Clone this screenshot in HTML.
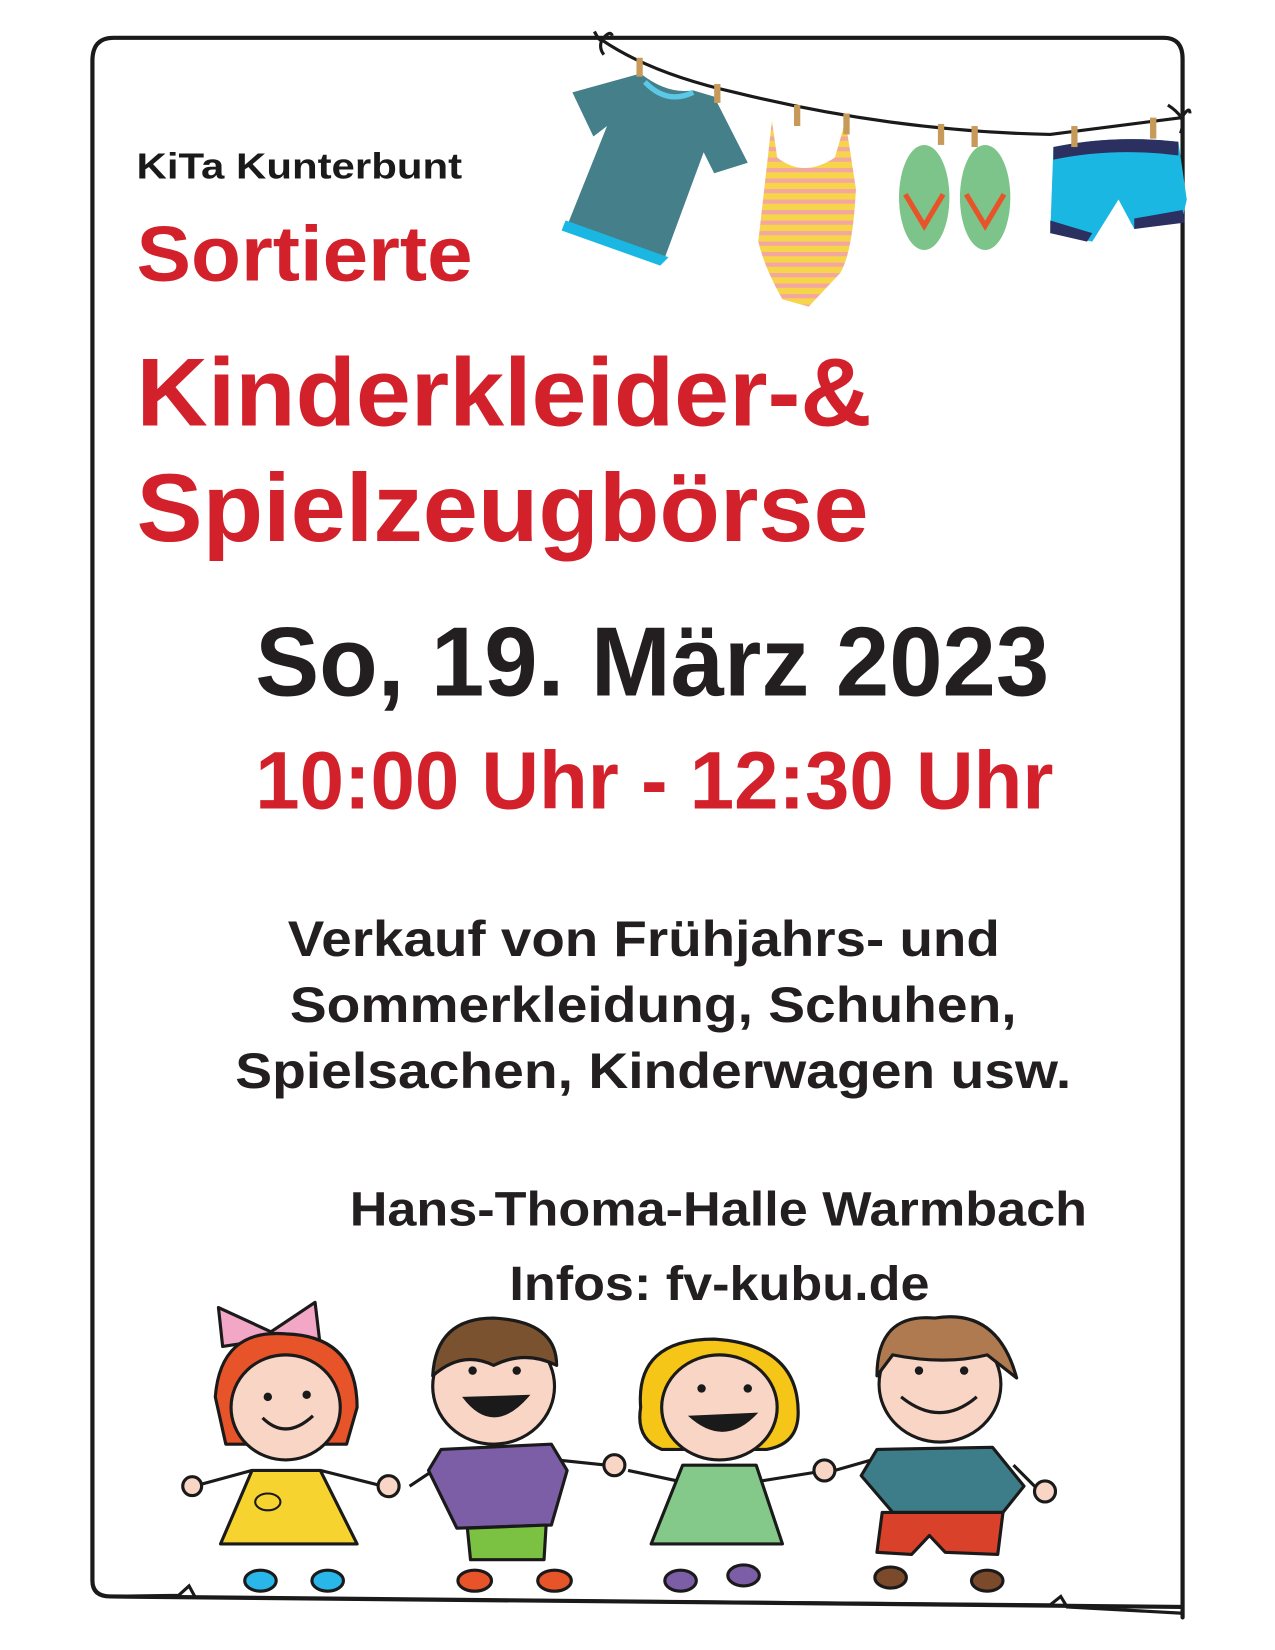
<!DOCTYPE html>
<html><head><meta charset="utf-8"><style>
html,body{margin:0;padding:0;background:#fff;}
svg{display:block;}
text{font-family:"Liberation Sans",sans-serif;font-weight:bold;}
</style></head><body>
<svg width="1275" height="1650" viewBox="0 0 1214 1571" preserveAspectRatio="none" xmlns="http://www.w3.org/2000/svg">
<defs>
<pattern id="st" width="10" height="10" patternUnits="userSpaceOnUse"><rect width="10" height="10" fill="#f7d54a"/><rect width="10" height="4" fill="#f3a7a0"/></pattern>
</defs>
<!-- frame -->
<path d="M108 36 L1108 36 Q1126 36 1126 56 L1126 1540 M88 1505 L88 58 Q88 36 108 36 M88 1505 Q88 1520 105 1520 L1126 1530" fill="none" stroke="#1a1a1a" stroke-width="4" stroke-linecap="round"/>
<path d="M100 1520 L170 1519 L180 1510 L186 1521 L1000 1528 L1010 1520 L1016 1530 L1126 1536" fill="none" stroke="#1a1a1a" stroke-width="3"/>
<!-- clothesline -->
<path d="M573 38 Q620 70 700 88 Q850 125 1000 128 L1125 112" fill="none" stroke="#1a1a1a" stroke-width="3"/>
<path d="M566 30 q5 10 7 8 q8 -10 10 -4 M573 38 q-3 8 2 14" fill="none" stroke="#1a1a1a" stroke-width="3"/>
<path d="M1112 100 q8 5 13 12 q8 -12 8 -4 M1125 112 q2 8 -1 15" fill="none" stroke="#1a1a1a" stroke-width="3"/>
<!-- t-shirt -->
<path d="M545 88 L610 70 Q635 90 660 86 L680 92 L712 155 L680 165 L670 145 L632 248 L540 215 L578 120 L565 130 Z" fill="#447f8a"/>
<path d="M540 213 L632 246 L628 250 L538 218 Z" fill="#1bb7e3" stroke="#1bb7e3" stroke-width="5"/>
<path d="M614 78 Q635 100 660 88" fill="none" stroke="#5cc8e8" stroke-width="5"/>
<!-- swimsuit -->
<path d="M735 115 L740 150 Q765 170 795 150 L805 115 L815 180 Q812 240 800 260 L770 292 L745 285 Q728 255 722 230 Z" fill="url(#st)"/>
<!-- flipflops -->
<ellipse cx="880" cy="188" rx="24" ry="50" fill="#7cc48a"/>
<ellipse cx="938" cy="188" rx="24" ry="50" fill="#7cc48a"/>
<path d="M862 185 L880 215 L898 185 M920 185 L938 215 L956 185" fill="none" stroke="#e8542a" stroke-width="5"/>
<!-- shorts -->
<path d="M1003 140 Q1060 128 1122 135 L1130 190 L1125 212 L1080 218 L1065 190 L1040 230 L1000 222 Z" fill="#1bb7e3"/>
<path d="M1003 140 Q1060 128 1122 135 L1122 148 Q1060 140 1003 152 Z M1000 210 L1040 222 L1035 230 L1000 222 Z M1080 208 L1126 200 L1128 212 L1080 218 Z" fill="#2b3060"/>
<!-- pegs -->
<g fill="#c89a5a"><rect x="606" y="55" width="6" height="18"/><rect x="680" y="80" width="6" height="18"/><rect x="756" y="100" width="6" height="20"/><rect x="803" y="108" width="6" height="20"/><rect x="893" y="118" width="6" height="20"/><rect x="925" y="120" width="6" height="20"/><rect x="1020" y="120" width="6" height="20"/><rect x="1095" y="112" width="6" height="20"/></g>
<!-- text -->
<text x="130" y="170" font-size="34" fill="#1a1a1a" textLength="310" lengthAdjust="spacingAndGlyphs">KiTa Kunterbunt</text>
<text x="130" y="267" font-size="74" fill="#d3212c" textLength="320" lengthAdjust="spacingAndGlyphs">Sortierte</text>
<text x="130" y="405" font-size="92" fill="#d3212c" textLength="700" lengthAdjust="spacingAndGlyphs">Kinderkleider-&amp;</text>
<text x="130" y="515" font-size="92" fill="#d3212c" textLength="697" lengthAdjust="spacingAndGlyphs">Spielzeugbörse</text>
<text x="243" y="662" font-size="94" fill="#231f20" textLength="756" lengthAdjust="spacingAndGlyphs">So, 19. März 2023</text>
<text x="243" y="770" font-size="78" fill="#d3212c" textLength="760" lengthAdjust="spacingAndGlyphs">10:00 Uhr - 12:30 Uhr</text>
<text x="274" y="910" font-size="48" fill="#231f20" textLength="678" lengthAdjust="spacingAndGlyphs">Verkauf von Frühjahrs- und</text>
<text x="276" y="973" font-size="48" fill="#231f20" textLength="692" lengthAdjust="spacingAndGlyphs">Sommerkleidung, Schuhen,</text>
<text x="224" y="1036" font-size="48" fill="#231f20" textLength="796" lengthAdjust="spacingAndGlyphs">Spielsachen, Kinderwagen usw.</text>
<text x="333" y="1167" font-size="46" fill="#231f20" textLength="702" lengthAdjust="spacingAndGlyphs">Hans-Thoma-Halle Warmbach</text>
<text x="485" y="1238" font-size="46" fill="#231f20" textLength="400" lengthAdjust="spacingAndGlyphs">Infos: fv-kubu.de</text>
<!-- kids -->
<g stroke="#1a1a1a" stroke-width="3" stroke-linejoin="round">
<!-- arms -->
<path d="M185 1415 L240 1400 M305 1400 L365 1415 M390 1415 L420 1395 M530 1390 L578 1395 M598 1400 L645 1410 M725 1410 L775 1402 M795 1400 L830 1390 M965 1395 L990 1420" fill="none"/>
<!-- kid1 -->
<path d="M208 1245 L258 1268 L300 1240 L305 1282 L258 1275 L212 1282 Z" fill="#f3a7c6"/>
<path d="M205 1330 Q210 1265 272 1270 Q340 1272 340 1340 L330 1375 L215 1375 Z" fill="#e8542a"/>
<ellipse cx="272" cy="1340" rx="52" ry="50" fill="#f9d5c5"/>
<path d="M240 1400 L305 1400 L340 1470 L210 1470 Z" fill="#f6d32e"/>
<ellipse cx="248" cy="1505" rx="15" ry="10" fill="#29b6e8"/><ellipse cx="312" cy="1505" rx="15" ry="10" fill="#29b6e8"/>
<circle cx="183" cy="1415" r="9" fill="#f9d5c5"/><circle cx="370" cy="1415" r="10" fill="#f9d5c5"/>
<!-- kid2 -->
<ellipse cx="470" cy="1320" rx="58" ry="55" fill="#f9d5c5"/>
<path d="M412 1310 Q415 1255 470 1255 Q530 1258 530 1300 Q500 1285 470 1300 Q440 1285 412 1310 Z" fill="#7a5230"/>
<path d="M420 1380 L525 1375 L540 1400 L525 1452 L435 1455 L408 1400 Z" fill="#7b5ea6"/>
<path d="M445 1455 L520 1452 L518 1485 L448 1485 Z" fill="#7cc242"/>
<ellipse cx="452" cy="1505" rx="16" ry="10" fill="#e8542a"/><ellipse cx="528" cy="1505" rx="16" ry="10" fill="#e8542a"/>
<circle cx="585" cy="1395" r="10" fill="#f9d5c5"/>
<!-- kid3 -->
<path d="M610 1340 Q605 1275 680 1275 Q760 1280 760 1345 Q760 1375 730 1380 L630 1380 Q605 1370 610 1340 Z" fill="#f5c518"/>
<ellipse cx="685" cy="1340" rx="55" ry="50" fill="#f9d5c5"/>
<path d="M650 1395 L720 1395 L745 1470 L620 1470 Z" fill="#84c98a"/>
<ellipse cx="648" cy="1505" rx="15" ry="10" fill="#7b5ea6"/><ellipse cx="708" cy="1500" rx="15" ry="10" fill="#7b5ea6"/>
<circle cx="785" cy="1400" r="10" fill="#f9d5c5"/>
<!-- kid4 -->
<ellipse cx="895" cy="1318" rx="58" ry="55" fill="#f9d5c5"/>
<path d="M835 1310 Q835 1250 890 1255 Q950 1245 968 1312 L940 1290 Q900 1300 850 1290 Z" fill="#b07a50"/>
<path d="M835 1380 L945 1378 L975 1415 L955 1440 L850 1440 L820 1405 Z" fill="#3d7d8a"/>
<path d="M840 1440 L955 1440 L950 1480 L900 1478 L885 1462 L868 1480 L835 1478 Z" fill="#d9412b"/>
<ellipse cx="848" cy="1502" rx="15" ry="10" fill="#7a4a2a"/><ellipse cx="940" cy="1505" rx="15" ry="10" fill="#7a4a2a"/>
<circle cx="995" cy="1420" r="10" fill="#f9d5c5"/>
</g>
<!-- faces -->
<g fill="#1a1a1a"><circle cx="255" cy="1330" r="4"/><circle cx="292" cy="1328" r="4"/><circle cx="450" cy="1305" r="4"/><circle cx="492" cy="1305" r="4"/><circle cx="668" cy="1322" r="4"/><circle cx="712" cy="1322" r="4"/><circle cx="875" cy="1305" r="4"/><circle cx="918" cy="1305" r="4"/></g>
<path d="M250 1350 Q272 1372 298 1348 M858 1330 Q895 1360 930 1330" fill="none" stroke="#1a1a1a" stroke-width="3"/>
<path d="M440 1330 Q470 1370 505 1328 Z M655 1348 Q690 1380 722 1345 Z" fill="#1a1a1a"/>
<path d="M255 1430 m-12 0 a12 8 0 1 0 24 0 a12 8 0 1 0 -24 0" fill="none" stroke="#1a1a1a" stroke-width="2"/>
</svg>
</body></html>
